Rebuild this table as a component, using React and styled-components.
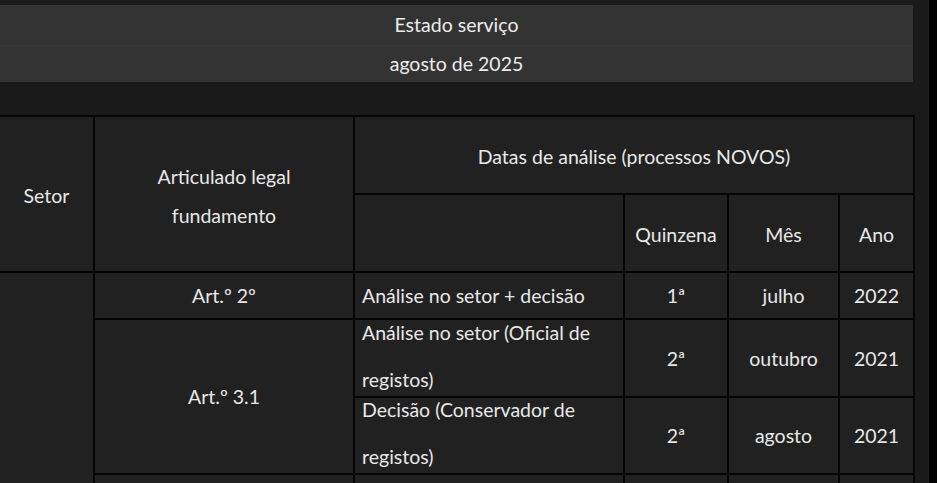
import React from 'react';
import styled, { createGlobalStyle } from 'styled-components';

const GlobalStyle = createGlobalStyle`
  html, body {
    margin: 0;
    padding: 0;
    background: #000;
    overflow: hidden;
  }
  body {
    font-family: Lato, "Liberation Sans", sans-serif;
    color: #e8e8e8;
  }
`;

const Page = styled.div`
  display: flex;
  height: 100vh;
  background: #000;
`;

const Main = styled.div`
  width: 929px;
  flex: none;
  background: #1a1a1a;
  padding-top: 5px;
  box-sizing: border-box;
  overflow: hidden;
`;

const Banner = styled.div`
  width: 913px;
  background: #333333;
  display: flex;
  flex-direction: column;
`;

const BannerRow = styled.div`
  height: ${({ h }) => h}px;
  display: flex;
  align-items: center;
  justify-content: center;
  padding-bottom: 1px;
  font-size: 19.5px;
  color: #ececec;
  border-top: ${({ first }) => (first ? 'none' : '1px solid #383838')};
  box-sizing: border-box;
`;

const Table = styled.table`
  margin-top: 33px;
  margin-left: -2px;
  width: 915px;
  table-layout: fixed;
  border-collapse: collapse;
  font-size: 19.5px;
`;

const Cell = styled.td`
  background: #212121;
  border: 2px solid #050505;
  padding: 0 7px;
  height: ${({ h }) => (h ? `${h}px` : 'auto')};
  line-height: 39px;
  text-align: ${({ left }) => (left ? 'left' : 'center')};
  vertical-align: middle;
  color: #e8e8e8;
  box-sizing: border-box;
  white-space: nowrap;
`;

const HeadCell = styled(Cell).attrs({ as: 'th' })`
  font-weight: normal;
  padding-top: 3px;
`;

const Lines = styled.div`
  display: flex;
  flex-direction: column;
  gap: ${({ multi }) => (multi ? '23px' : '0')};
  line-height: ${({ multi }) => (multi ? '24px' : '39px')};
  padding-bottom: ${({ multi }) => (multi ? '4px' : '0')};
`;

const rows = [
  { art: 'Art.º 2º', artSpan: 1, desc: ['Análise no setor + decisão'], q: '1ª', m: 'julho', y: '2022', h: 47 },
  { art: 'Art.º 3.1', artSpan: 2, desc: ['Análise no setor (Oficial de', 'registos)'], q: '2ª', m: 'outubro', y: '2021', h: 78 },
  { desc: ['Decisão (Conservador de', 'registos)'], q: '2ª', m: 'agosto', y: '2021', h: 77 },
];

export default function App() {
  return (
    <>
      <GlobalStyle />
      <Page>
        <Main>
          <Banner>
            <BannerRow first h={40}>Estado serviço</BannerRow>
            <BannerRow h={37}>agosto de 2025</BannerRow>
          </Banner>

          <Table>
            <colgroup>
              <col style={{ width: 95 }} />
              <col style={{ width: 260 }} />
              <col style={{ width: 270 }} />
              <col style={{ width: 104 }} />
              <col style={{ width: 111 }} />
              <col style={{ width: 75 }} />
            </colgroup>
            <thead>
              <tr>
                <HeadCell rowSpan={2}>Setor</HeadCell>
                <HeadCell rowSpan={2}>
                  Articulado legal
                  <br />
                  fundamento
                </HeadCell>
                <HeadCell colSpan={4} h={78}>Datas de análise (processos NOVOS)</HeadCell>
              </tr>
              <tr>
                <HeadCell h={78} />
                <HeadCell>Quinzena</HeadCell>
                <HeadCell>Mês</HeadCell>
                <HeadCell>Ano</HeadCell>
              </tr>
            </thead>
            <tbody>
              {rows.map((r, i) => (
                <tr key={i}>
                  {i === 0 && <Cell rowSpan={5} />}
                  {r.art && <Cell rowSpan={r.artSpan}>{r.art}</Cell>}
                  <Cell left h={r.h}>
                    <Lines multi={r.desc.length > 1}>
                      {r.desc.map((line, j) => (
                        <span key={j}>{line}</span>
                      ))}
                    </Lines>
                  </Cell>
                  <Cell>{r.q}</Cell>
                  <Cell>{r.m}</Cell>
                  <Cell>{r.y}</Cell>
                </tr>
              ))}
              <tr>
                <Cell h={47} />
                <Cell left />
                <Cell />
                <Cell />
                <Cell />
              </tr>
            </tbody>
          </Table>
        </Main>
        <div />
      </Page>
    </>
  );
}
